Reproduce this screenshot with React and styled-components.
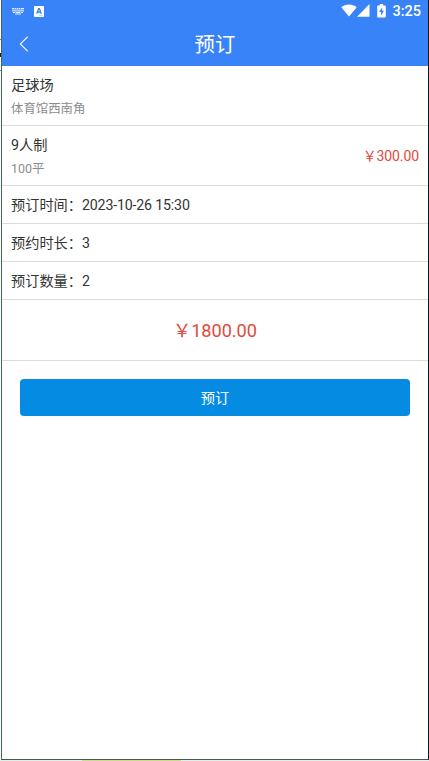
import React from "react";
import styled, { createGlobalStyle } from "styled-components";

const GlobalStyle = createGlobalStyle`
  *, *::before, *::after { box-sizing: border-box; }
  html, body { margin: 0; padding: 0; background: #fff; }
  body {
    font-family: Roboto, "Noto Sans CJK SC", sans-serif;
    overflow: hidden;
  }
`;

const Desktop = styled.div`
  width: 429px;
  height: 761px;
  display: grid;
  grid-template-columns: 1px 1fr;
  grid-template-rows: 760px 1px;
  background: #fff;
`;

const EdgeStrip = styled.div`
  display: flex;
  flex-direction: column;
  justify-content: space-between;
  height: 71px;
  padding-top: 39px;
`;

const EdgeMark = styled.span`
  height: ${(p) => p.$size}px;
  background: ${(p) => p.$color};
`;

const BottomStrip = styled.div`
  grid-column: 1 / -1;
  display: flex;
  padding-left: 82px;
  background: #e4eee8;
`;

const BottomMark = styled.span`
  width: 99px;
  background: #d3d98c;
`;

const Phone = styled.main`
  display: flex;
  flex-direction: column;
  border-left: 1px solid #40695d;
  border-right: 1px solid #06191c;
  border-bottom: 1px solid #41594f;
  background: #fff;
`;

const Header = styled.header`
  height: 66px;
  background: #3983f8;
  color: #fff;
`;

const StatusBar = styled.div`
  height: 22px;
  display: flex;
  align-items: center;
  justify-content: space-between;
  padding: 0 7px 0 9px;
`;

const StatusGroup = styled.div`
  display: flex;
  align-items: center;
  svg { display: block; }
`;

const StatusIcons = styled.div`
  display: flex;
  align-items: center;
  margin-top: -1px;
`;

const KeyboardSlot = styled.span`
  margin-right: 9px;
`;

const BatterySlot = styled.span`
  margin-left: 7px;
`;

const Clock = styled.span`
  margin-left: 6px;
  padding-top: 2px;
  font-size: 14.5px;
  line-height: 20px;
  font-weight: 500;
`;

const TitleBar = styled.div`
  height: 44px;
  display: grid;
  grid-template-columns: 44px 1fr 44px;
  align-items: center;
`;

const BackButton = styled.button`
  height: 44px;
  padding: 0 0 0 17px;
  border: 0;
  background: none;
  color: #e4f0ff;
  svg { display: block; }
`;

const Title = styled.h1`
  margin: 0;
  padding-top: 2px;
  text-align: center;
  font-size: 20.4px;
  line-height: 42px;
  font-weight: 400;
`;

const Row = styled.section`
  height: ${(p) => p.$height}px;
  display: flex;
  align-items: center;
  justify-content: ${(p) => (p.$center ? "center" : "space-between")};
  padding: 0 9px;
  border-bottom: 1px solid #dcdcdc;
`;

const Label = styled.div`
  font-size: 14.2px;
  line-height: 24px;
  color: #333;
`;

const Value = styled.span`
  letter-spacing: -0.17px;
`;

const Note = styled.div`
  padding-top: 1px;
  margin-bottom: -1px;
  font-size: 12.4px;
  line-height: 22px;
  color: #8c8c8c;
`;

const Price = styled.span`
  padding-top: ${(p) => (p.$large ? 2 : 0)}px;
  font-size: ${(p) => (p.$large ? 18.2 : 14)}px;
  letter-spacing: ${(p) => (p.$large ? -0.05 : -0.1)}px;
  line-height: 24px;
  color: #e14b3b;
`;

const SubmitButton = styled.button`
  height: 37px;
  margin: 18px 18px 0;
  padding: 2px 0 0;
  border: 0;
  border-radius: 4px;
  background: #068be2;
  color: #fff;
  font: inherit;
  font-size: 14.2px;
  line-height: 35px;
`;

const KeyboardIcon = () => (
  <svg width="14" height="8" viewBox="0 0 14 8" fill="#e6f0ff">
    <path d="M1 1h2v1H1zM4 1h1v1H4zM6 1h1v1H6zM8 1h1v1H8zM10 1h3v1h-3zM1.5 3h1v1h-1zM3.5 3h1v1h-1zM5.5 3h1v1h-1zM7.5 3h1v1h-1zM9.5 3h1v1h-1zM11.5 3h1v1h-1zM2 5h2v1H2zM5 5h4v1H5zM10 5h2v1h-2zM4 6.5h6v1H4z" />
    <path d="M1 1h12v3.5l-1 1.5H2L1 4.5z" opacity=".4" />
  </svg>
);

const InputIcon = () => (
  <svg width="10" height="11" viewBox="0 0 10 11">
    <rect width="10" height="11" rx=".7" fill="#fff" />
    <path d="M2.7 7.8 4.6 2.6h.8l1.9 5.2M3.5 6h3" fill="none" stroke="#3983f8" strokeWidth="1.3" />
    <path d="M5 9.5h3.5" stroke="#a9c8fb" strokeWidth=".7" />
  </svg>
);

const WifiIcon = () => (
  <svg width="16" height="13" viewBox="0 0 16 13">
    <path d="M.3 3.2C4.6-.4 11.4-.4 15.7 3.2L8 12.6z" fill="#fff" />
  </svg>
);

const SignalIcon = () => (
  <svg width="13" height="13" viewBox="0 0 13 13">
    <path d="M12.5 0v12.7H0z" fill="#fff" />
  </svg>
);

const BatteryIcon = () => (
  <svg width="9" height="14" viewBox="0 0 9 14">
    <path d="M2.8 0h3.4v1.5H8q.8 0 .8.8v10.4q0 .8-.8.8H1q-.8 0-.8-.8V2.3q0-.8.8-.8h1.8z" fill="#fff" />
    <path d="M5.2 3.4 2.1 8h2v3.4L7 6.8H5.2z" fill="#3983f8" />
  </svg>
);

const details = [
  ["预订时间", "2023-10-26 15:30"],
  ["预约时长", "3"],
  ["预订数量", "2"],
];

export default function App() {
  return (
    <Desktop>
      <GlobalStyle />
      <EdgeStrip>
        <EdgeMark $size={1} $color="#6d8c82" />
        <EdgeMark $size={4} $color="#1b2523" />
        <EdgeMark $size={1} $color="#6d8c82" />
      </EdgeStrip>
      <Phone>
        <Header>
          <StatusBar>
            <StatusGroup>
              <KeyboardSlot><KeyboardIcon /></KeyboardSlot>
              <InputIcon />
            </StatusGroup>
            <StatusGroup>
              <StatusIcons>
                <WifiIcon />
                <SignalIcon />
                <BatterySlot><BatteryIcon /></BatterySlot>
              </StatusIcons>
              <Clock>3:25</Clock>
            </StatusGroup>
          </StatusBar>
          <TitleBar>
            <BackButton aria-label="返回">
              <svg width="10" height="16" viewBox="0 0 10 16" fill="none" stroke="currentColor" strokeWidth="1.2">
                <path d="M8.7.7 1.3 8l7.4 7.3" />
              </svg>
            </BackButton>
            <Title>预订</Title>
          </TitleBar>
        </Header>
        <Row $height={60}>
          <div>
            <Label>足球场</Label>
            <Note>体育馆西南角</Note>
          </div>
        </Row>
        <Row $height={60}>
          <div>
            <Label>9人制</Label>
            <Note>100平</Note>
          </div>
          <Price>￥300.00</Price>
        </Row>
        {details.map(([name, value]) => (
          <Row key={name} $height={38}>
            <Label>{name}：<Value>{value}</Value></Label>
          </Row>
        ))}
        <Row $height={61} $center>
          <Price $large>￥1800.00</Price>
        </Row>
        <SubmitButton>预订</SubmitButton>
      </Phone>
      <BottomStrip>
        <BottomMark />
      </BottomStrip>
    </Desktop>
  );
}
